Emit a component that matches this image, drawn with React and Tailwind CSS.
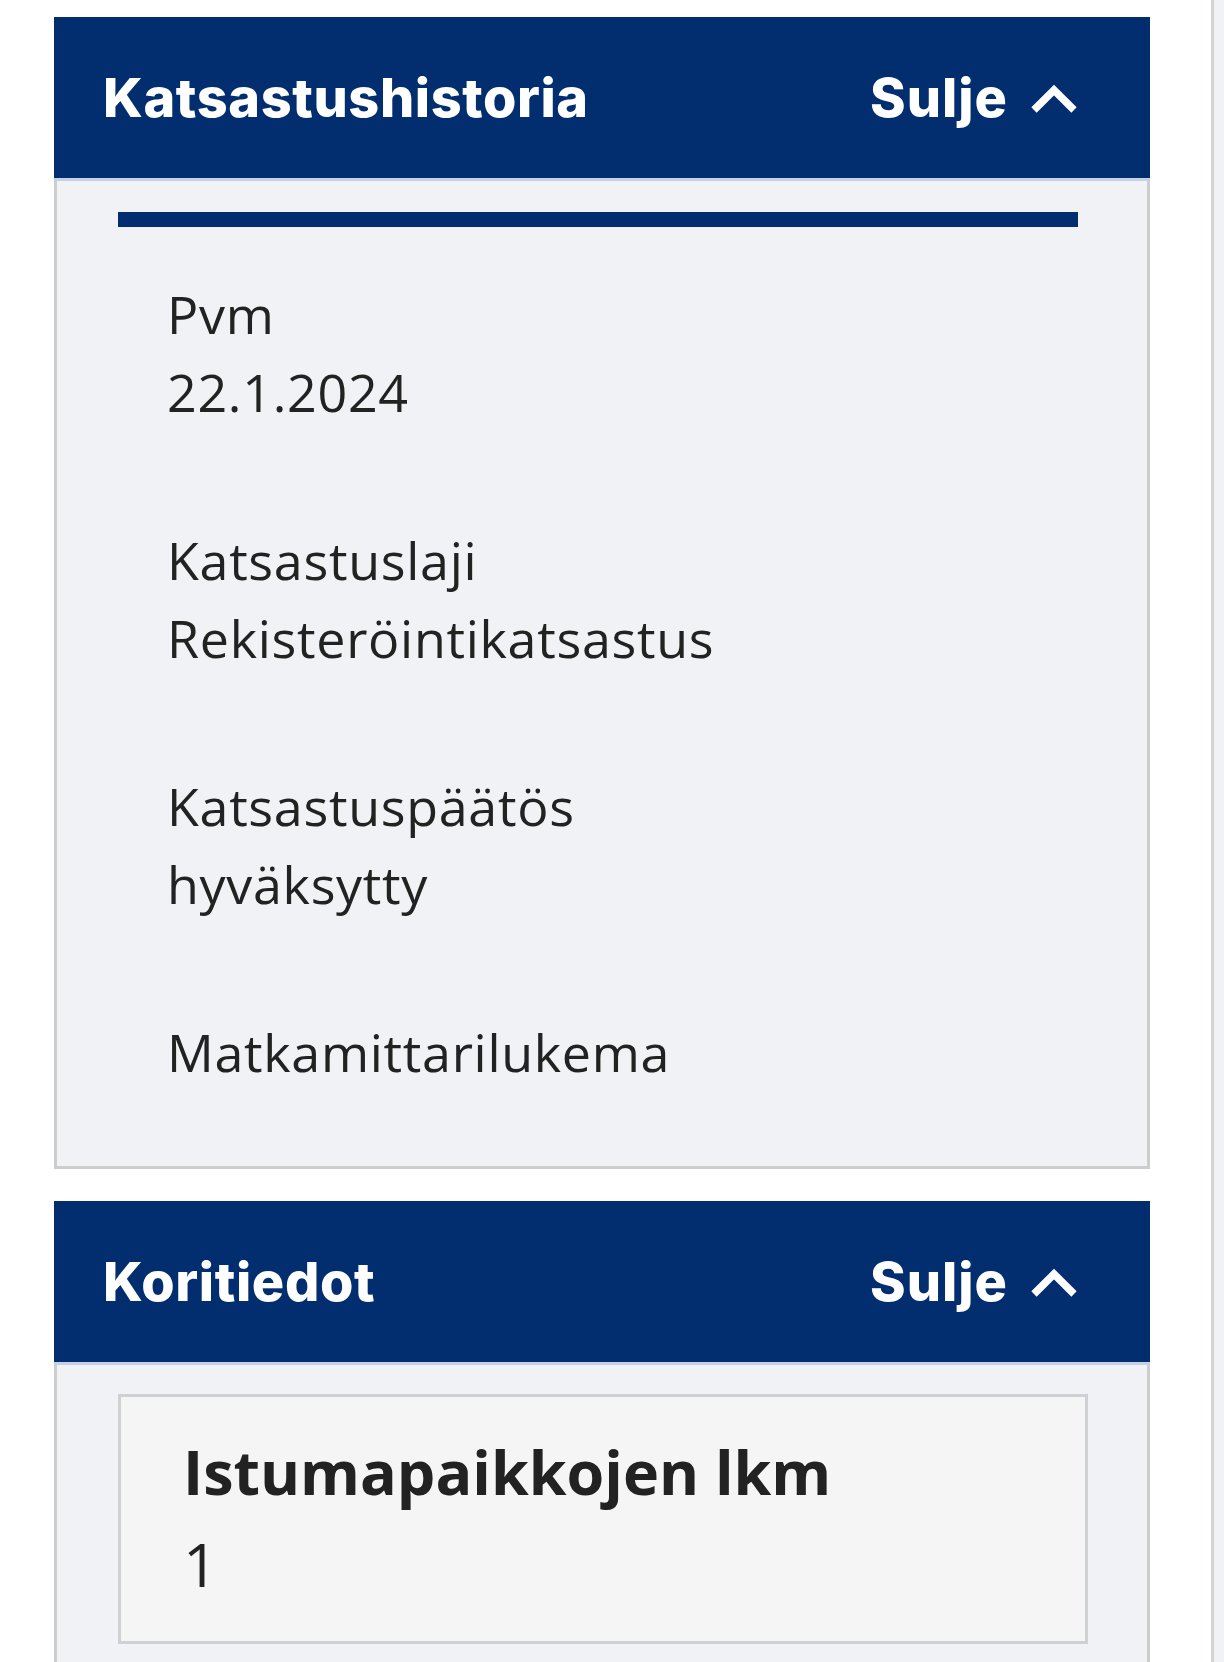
import React from "react";

const body = { fontFamily: '"Open Sans", "Noto Sans", sans-serif' };
const head = { fontFamily: 'Inter, "Open Sans", sans-serif' };

function Chevron() {
  return (
    <svg width="46" height="30" viewBox="0 0 46 30" className="block">
      <path d="M3 27 L23 7 L43 27" fill="none" stroke="#ffffff" strokeWidth="7.5" strokeLinecap="butt" strokeLinejoin="miter" />
    </svg>
  );
}

function Header({ title }) {
  return (
    <div className="flex h-[161px] items-center justify-between bg-[#022d6f] pl-[49px] pr-[73px] text-white" style={head}>
      <div className="text-[54px] font-extrabold leading-none tracking-[0.6px]">{title}</div>
      <div className="flex items-center gap-[23px]">
        <span className="text-[54px] font-extrabold leading-none tracking-[1px]">Sulje</span>
        <Chevron />
      </div>
    </div>
  );
}

function Field({ label, value, last }) {
  return (
    <div className={last ? "" : "mb-[90px]"}>
      <div className="text-[52px] leading-[78px] tracking-[0.7px] text-[#222222]">{label}</div>
      <div className={(last ? "h-[75px] " : "h-[78px] ") + "text-[52px] leading-[78px] tracking-[0.7px] text-[#222222]"}>{value}</div>
    </div>
  );
}

export default function App() {
  return (
    <div className="flex h-[1662px] w-[1224px] overflow-hidden bg-white" style={body}>
      <div className="ml-[54px] w-[1096px] pt-[17px]">
        <Header title="Katsastushistoria" />
        <div className="border-x-[3px] border-b-[3px] border-t-[3px] border-[#cdcdcd] border-t-[#c4d1e6] bg-[#f1f2f6]">
          <div className="ml-[61px] mt-[31px] h-[15px] w-[960px] bg-[#022d6f]" />
          <div className="pl-[110px] pt-[48px]">
            <Field label="Pvm" value="22.1.2024" />
            <Field label="Katsastuslaji" value="Rekisteröintikatsastus" />
            <Field label="Katsastuspäätös" value="hyväksytty" />
            <Field label="Matkamittarilukema" value="" last />
          </div>
        </div>

        <div className="mt-[32px]">
          <Header title="Koritiedot" />
          <div className="border-x-[3px] border-t-[3px] border-[#cdcdcd] border-t-[#c4d1e6] bg-[#f1f2f6] pb-[40px] pt-[29px]">
            <div className="ml-[61px] w-[970px] border-[3px] border-[#cfd0d4] bg-[#f5f5f6] pb-[31px] pl-[62px] pt-[29px]">
              <div className="text-[61px] font-bold leading-[92px] text-[#222222]">Istumapaikkojen lkm</div>
              <div className="text-[61px] leading-[92px] text-[#222222]">1</div>
            </div>
          </div>
        </div>
      </div>
      <div className="ml-auto h-full w-[13px] border-l-[3px] border-[#d2d3d6] bg-[#f1f2f5]" />
    </div>
  );
}
